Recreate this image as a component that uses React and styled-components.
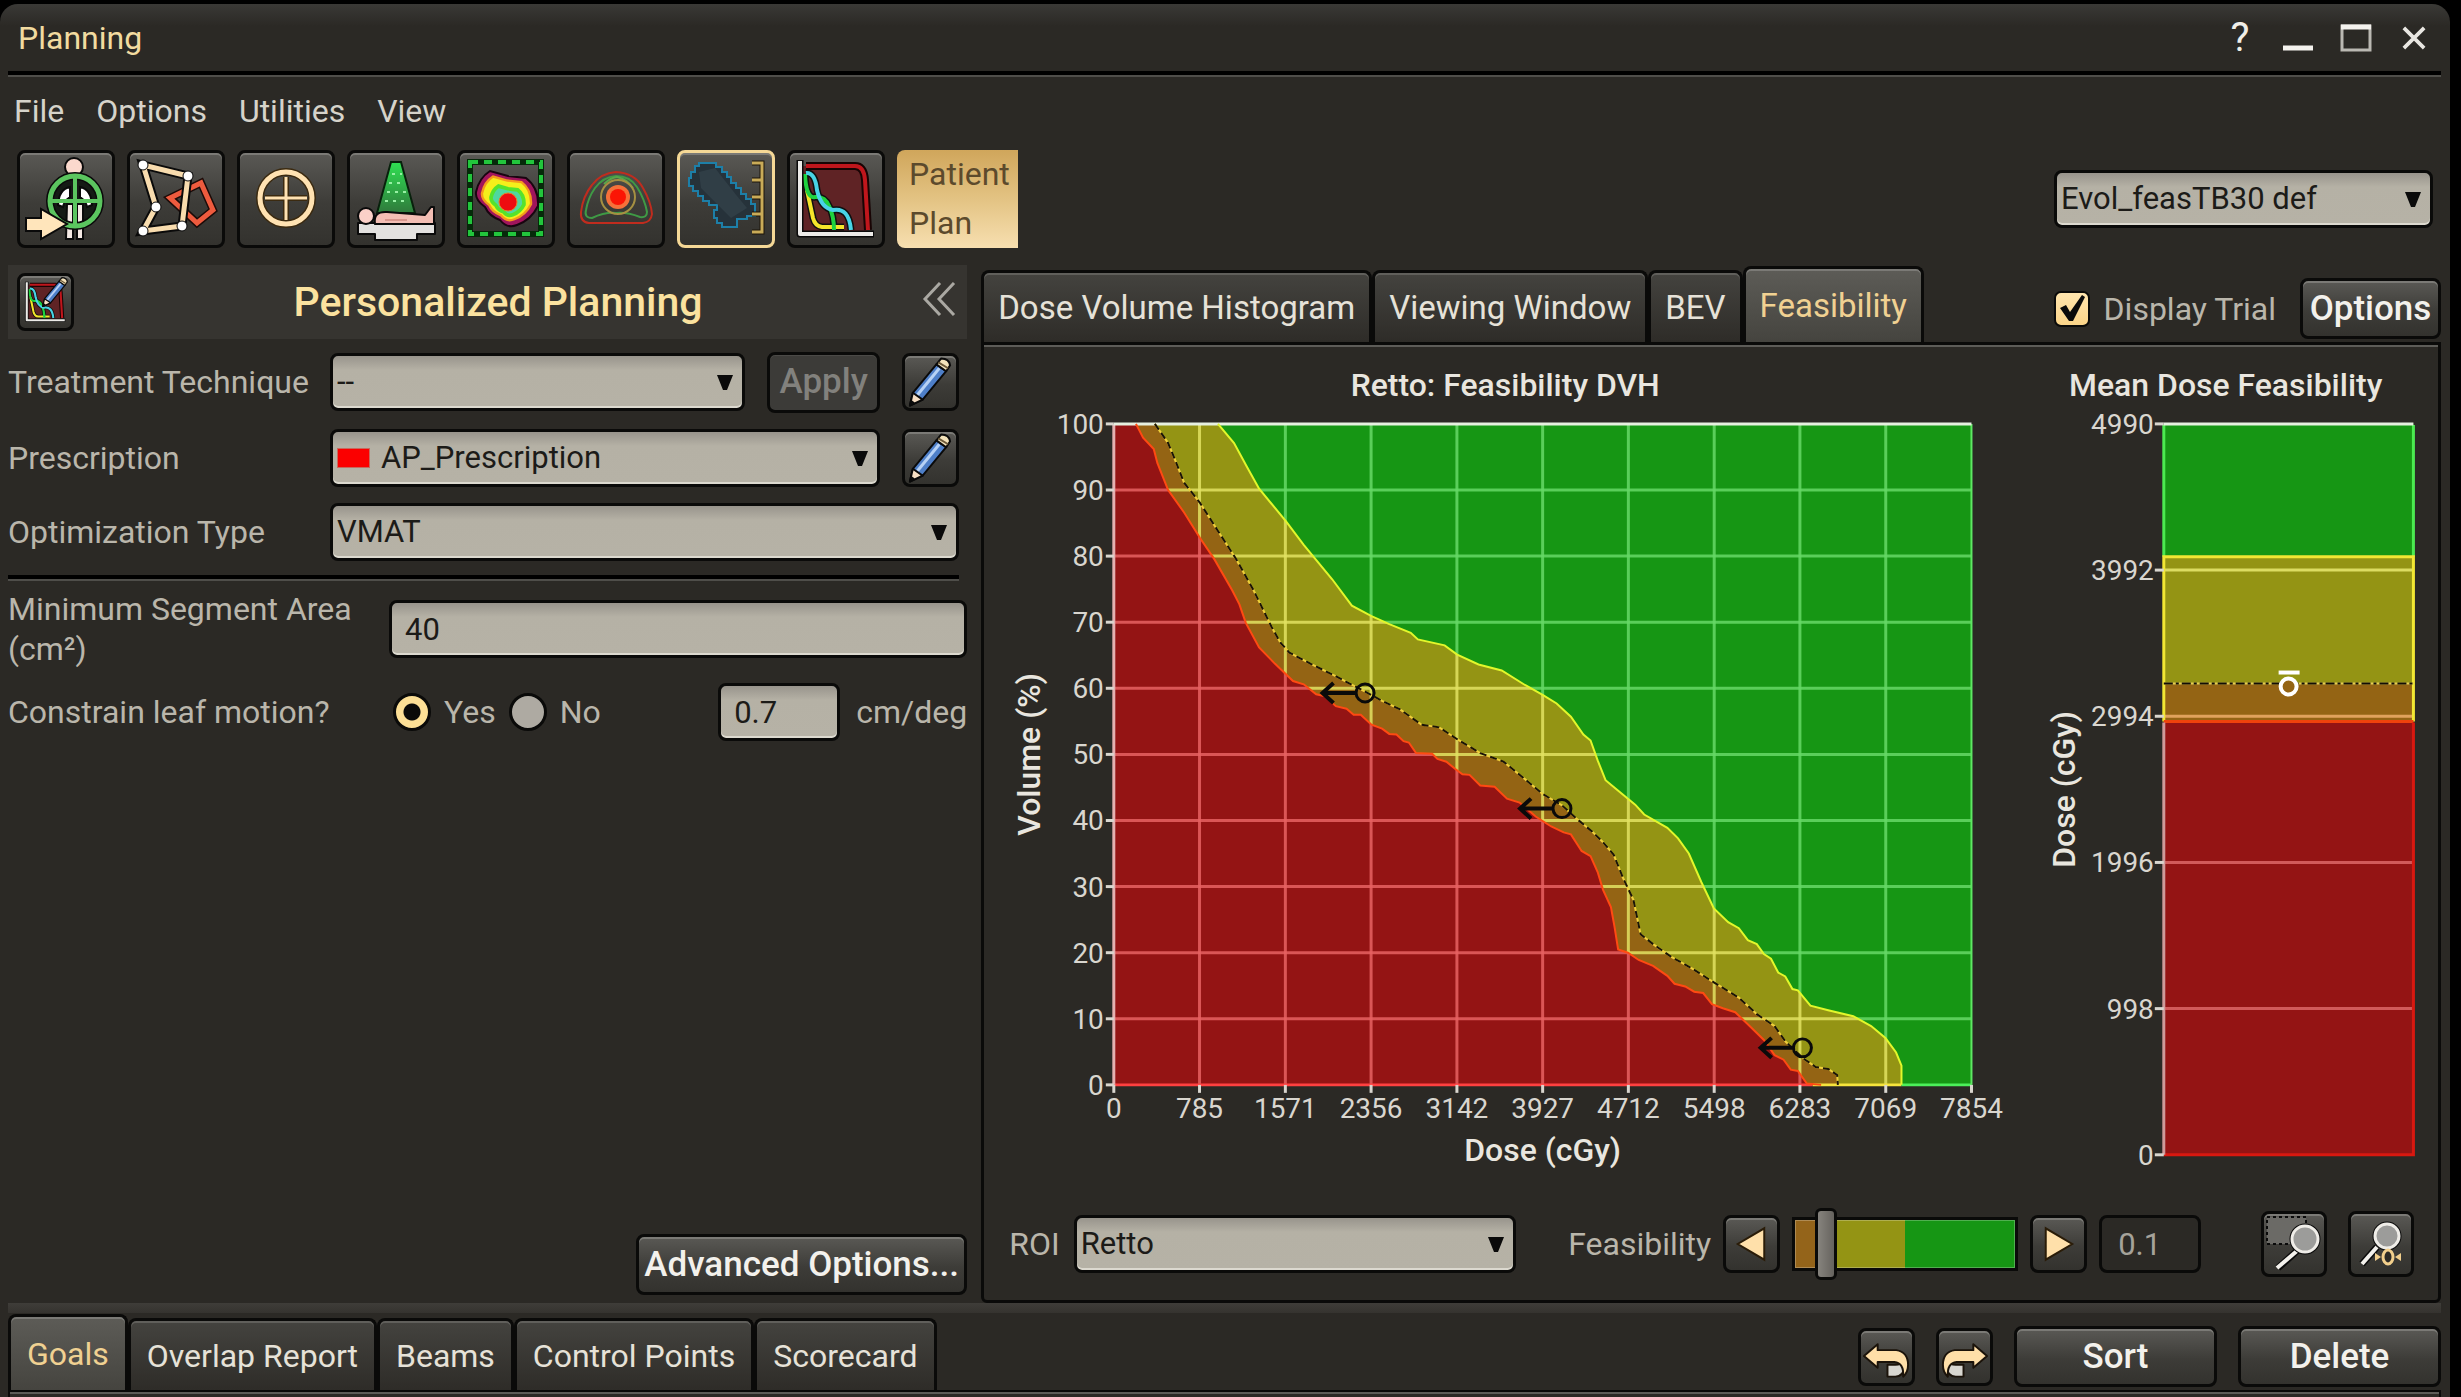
import React from "react";
import styled, { createGlobalStyle, css } from "styled-components";

const GlobalStyle = createGlobalStyle`
  *, *::before, *::after { box-sizing: border-box; }
  body {
    margin: 0;
    background: #000;
    color: #bab6ab;
    font-family: Roboto, "Noto Sans", sans-serif;
    font-size: 32px;
    line-height: 40px;
  }
  button, input, select { font: inherit; margin: 0; }
`;

const raised = css`
  background: linear-gradient(#5a5955, #3d3c38 55%, #33322e);
  border: 3px solid #0a0a09;
  border-radius: 8px;
  box-shadow: inset 0 2px 0 #7b7a76;
`;

const sunken = css`
  background: linear-gradient(#98948c, #b5b1a5 14px, #b6b2a6);
  border: 3px solid #0a0a09;
  border-radius: 8px;
  box-shadow: inset 0 -2px 0 #dcd9cf;
  color: #1c1b18;
  font-size: 31px;
`;

/* ---------- window ---------- */

const Window = styled.div`
  display: flex;
  flex-direction: column;
  min-height: calc(100vh - 4px);
  margin: 4px 11px 0 0;
  padding: 0 9px 0 8px;
  background: linear-gradient(#3a3936, #2b2925 22px);
  border-radius: 18px 18px 0 0;
`;

const Rule = styled.hr`
  flex: none;
  width: 100%;
  height: 6px;
  margin: 0;
  border: 0;
  border-top: 4px solid #000;
  border-bottom: 2px solid #4f4e4a;
`;

const TitleBar = styled.header`
  display: flex;
  align-items: center;
  justify-content: space-between;
  height: 67px;
  padding: 0 5px 0 10px;
`;

const WindowTitle = styled.h1`
  margin: 0;
  font-size: 32px;
  font-weight: 400;
  color: #f2dba0;
`;

const WindowControls = styled.div`
  display: flex;
  gap: 14px;
`;

const WindowButton = styled.button`
  display: grid;
  place-items: center;
  width: 44px;
  height: 44px;
  padding: 0;
  border: 0;
  background: none;
  color: #f0eee8;
  font-size: 40px;
`;

const MenuBar = styled.nav`
  display: flex;
  gap: 32px;
  padding: 14px 6px 0;
  height: 73px;
`;

const MenuItem = styled.a`
  color: #d6d3ca;
  text-decoration: none;
`;

const ToolBar = styled.div`
  display: flex;
  align-items: flex-start;
  gap: 12px;
  height: 115px;
  padding: 0 8px 0 9px;
`;

const ToolButton = styled.button`
  ${raised}
  flex: none;
  width: 98px;
  height: 98px;
  padding: 0;
  overflow: hidden;
  ${(p) => p.$active && css`border-color: #f5d896;`}
  svg { display: block; width: 92px; height: 92px; }
`;

const ContextTile = styled.button`
  flex: none;
  width: 121px;
  height: 98px;
  padding: 0 0 0 12px;
  border: 0;
  border-radius: 8px 0 0 8px;
  background: linear-gradient(#d0a65b, #e3c383 50%, #f7dfb0);
  color: #5c4a2c;
  line-height: 49px;
  text-align: left;
`;

const TrialSlot = styled.div`
  padding-top: 20px;
`;

const Spacer = styled.div`
  flex: 1;
`;

/* ---------- form controls ---------- */

const Combo = styled.div`
  position: relative;
  flex: ${(p) => (p.$width ? "none" : "1")};
  width: ${(p) => (p.$width ? p.$width + "px" : "auto")};
  min-width: 0;
`;

const Select = styled.select`
  ${sunken}
  display: block;
  width: 100%;
  height: 58px;
  padding: 0 40px 0 ${(p) => (p.$swatch ? 48 : 4)}px;
  appearance: none;
`;

const Swatch = styled.span`
  position: absolute;
  left: 7px;
  top: 19px;
  width: 33px;
  height: 20px;
  background: #fb0000;
  border: 1px solid #c86a5e;
`;

const Caret = styled.svg`
  position: absolute;
  right: 12px;
  top: 22px;
  width: 16px;
  height: 15px;
  pointer-events: none;
`;

const Label = styled.label`
  flex: none;
  width: ${(p) => (p.$width ? p.$width + "px" : "auto")};
  white-space: nowrap;
`;

const TextBox = styled.input`
  ${sunken}
  flex: ${(p) => (p.$width ? "none" : "1")};
  width: ${(p) => (p.$width ? p.$width + "px" : "auto")};
  min-width: 0;
  height: 58px;
  padding: 0 13px;
`;

const ReadOut = styled.input`
  width: 102px;
  height: 58px;
  padding: 0 16px;
  background: #2b2925;
  border: 3px solid #0a0a09;
  border-radius: 8px;
  color: #a5a29a;
  font-size: 31px;
`;

const Button = styled.button`
  ${raised}
  flex: none;
  width: ${(p) => p.$width}px;
  height: 61px;
  padding: 0;
  color: #f3f1ec;
  font-size: 35px;
  font-weight: 500;
  white-space: nowrap;
  &:disabled {
    background: #3c3b38;
    box-shadow: inset 0 1px 0 #4b4a47;
    color: #82817d;
  }
`;

const IconButton = styled.button`
  ${raised}
  flex: none;
  display: grid;
  place-items: center;
  width: ${(p) => p.$size || 57}px;
  height: ${(p) => p.$size || 58}px;
  padding: 0;
  svg { display: block; width: 100%; height: 100%; }
`;

const Radio = styled.input`
  flex: none;
  width: 38px;
  height: 38px;
  appearance: none;
  border: 3px solid #0a0a09;
  border-radius: 50%;
  background: #aeaaa2;
  &:checked { background: radial-gradient(circle, #0a0a09 8px, #fcdf96 9px); }
`;

const CheckWrap = styled.span`
  position: relative;
  flex: none;
  display: block;
  width: 36px;
  height: 36px;
  svg { position: absolute; inset: 0; pointer-events: none; }
`;

const CheckBox = styled.input`
  display: block;
  width: 36px;
  height: 36px;
  appearance: none;
  border: 2px solid #0a0a09;
  border-radius: 7px;
  background: linear-gradient(#ffe5ae, #fbd488);
`;

/* ---------- body ---------- */

const Body = styled.main`
  flex: 1;
  display: grid;
  grid-template-columns: minmax(0, 2fr) minmax(0, 3fr);
`;

const Sidebar = styled.section`
  display: flex;
  flex-direction: column;
  padding: 0 14px 8px 0;
`;

const SidebarHeader = styled.div`
  display: flex;
  align-items: center;
  justify-content: space-between;
  height: 74px;
  padding: 0 11px 0 9px;
  background: #363430;
`;

const SidebarTitle = styled.h2`
  margin: 0;
  color: #fbe29f;
  font-size: 41px;
  font-weight: 500;
`;

const Collapse = styled.button`
  width: 34px;
  height: 40px;
  padding: 0;
  border: 0;
  background: none;
`;

const Fields = styled.div`
  display: flex;
  flex-direction: column;
  gap: 14px;
  padding: ${(p) => (p.$inset ? "12px 8px 0 0" : "8px 0 0")};
`;

const Row = styled.div`
  display: flex;
  align-items: center;
  gap: 22px;
  min-height: ${(p) => (p.$tall ? 62 : 58)}px;
`;

const RadioGroup = styled.div`
  flex: 1;
  display: flex;
  align-items: center;
  gap: 13px;
  padding-left: 4px;
`;

const Measure = styled.label`
  display: flex;
  align-items: center;
  gap: 16px;
`;

const SidebarFooter = styled.div`
  display: flex;
  justify-content: flex-end;
  margin-top: auto;
`;

const TabRow = styled.div`
  display: flex;
  align-items: flex-end;
  height: ${(p) => p.$height}px;
  font-size: ${(p) => (p.$compact ? 32 : 33)}px;
  --tab-inset: ${(p) => (p.$compact ? 16 : 14)}px;
`;

const Tab = styled.button`
  flex: none;
  height: ${(p) => (p.$active ? 76 : 72)}px;
  padding: 0 var(--tab-inset);
  border: 3px solid #0a0a09;
  border-bottom: 0;
  border-radius: 8px 8px 0 0;
  background: ${(p) =>
    p.$active
      ? "linear-gradient(#5d5c57, #45443f)"
      : "linear-gradient(#44433f, #2e2c28)"};
  box-shadow: inset 0 2px 0 ${(p) => (p.$active ? "#7b7a76" : "#605f5b")};
  color: ${(p) => (p.$active ? "#f0d192" : "#e6e2d8")};
`;

const Viewer = styled.section`
  display: flex;
  flex-direction: column;
`;

const ViewerPanel = styled.div`
  flex: 1;
  display: flex;
  flex-direction: column;
  justify-content: space-between;
  padding: 16px 24px 20px 6px;
  border: 3px solid #0a0a09;
  border-radius: 0 0 6px 6px;
  box-shadow: inset 0 2px 0 #5d5c58;
`;

const TrialToggle = styled.label`
  display: flex;
  align-items: center;
  gap: 14px;
  height: 60px;
  margin: 0 24px 3px 0;
  font-size: 32px;
`;

const TrialOptions = styled.div`
  margin-bottom: 3px;
`;

const Charts = styled.div`
  display: grid;
  grid-template-columns: 1040fr 386fr;
  svg { display: block; width: 100%; height: auto; overflow: visible; }
`;

const ChartControls = styled.div`
  display: flex;
  align-items: center;
  height: 72px;
  padding-left: 19px;
`;

const RoiField = styled.div`
  display: flex;
  align-items: center;
  gap: 14px;
  width: 507px;
  margin-right: 52px;
`;

const Stepper = styled.div`
  flex: 1;
  display: flex;
  align-items: center;
  gap: 12px;
`;

const ZoomButtons = styled.div`
  display: flex;
  gap: 21px;
`;

const Slider = styled.input`
  width: 226px;
  height: 72px;
  appearance: none;
  background: none;
  &::-webkit-slider-runnable-track {
    height: 54px;
    border: 3px solid #0a0a09;
    background: linear-gradient(90deg, #94641a 0 12%, #949414 12% 50%, #169614 50%);
    box-shadow: inset 0 0 0 1px rgba(255, 255, 255, 0.25);
  }
  &::-webkit-slider-thumb {
    appearance: none;
    width: 22px;
    height: 72px;
    margin-top: -12px;
    border: 3px solid #0a0a09;
    border-radius: 6px;
    background: linear-gradient(90deg, #86837d, #66635e);
  }
`;

/* ---------- bottom ---------- */

const Ledge = styled.div`
  height: 10px;
  background: linear-gradient(#3f3d39, #35332f);
`;

const BottomBar = styled.footer`
  display: flex;
  justify-content: space-between;
  align-items: flex-end;
`;

const Actions = styled.div`
  display: flex;
  align-items: center;
  gap: 21px;
  padding-bottom: 3px;
`;

const BottomEdge = styled.div`
  height: 7px;
  border: 2px solid #0a0a09;
  border-bottom: 0;
  box-shadow: inset 0 2px 0 #5d5c58;
`;

/* ---------- chart text ---------- */

const AxisText = styled.text`
  fill: #d9d6cf;
  font-size: 28px;
`;

const ChartText = styled.text`
  fill: #e9e6df;
  font-size: 32px;
  font-weight: 500;
  text-anchor: middle;
`;

/* ---------- icons ---------- */

const PencilShape = () => (
  <g strokeLinejoin="round">
    <path d="M5 50 L8 37 L32 8 L42 15 L18 44 Z" fill="#4e7fc8" stroke="#0a0a0a" strokeWidth="2" />
    <path d="M12 40 L35 12" stroke="#b7d2f5" strokeWidth="3" />
    <path d="M32 8 L37 2 Q45 2 46 9 L42 15 Z" fill="#f4e3bb" stroke="#0a0a0a" strokeWidth="2" />
    <path d="M34 6 L44 12" stroke="#6d5a3a" strokeWidth="2" />
    <path d="M5 50 L8 37 L18 44 Z" fill="#f7dfc4" stroke="#0a0a0a" strokeWidth="2" />
    <path d="M4 51 L6 44 L10 47 Z" fill="#0a0a0a" />
  </g>
);

const PencilIcon = () => (
  <svg viewBox="0 0 52 52" aria-hidden="true">
    <PencilShape />
  </svg>
);

const HistogramShape = () => (
  <g fill="none" strokeLinejoin="round">
    <path d="M15 16 H68 Q76 16 77 30 L80 81 H15 Z" fill="#5f2325" />
    <path d="M19 16 H68 Q77 16 78 30 L81 80" stroke="#180404" strokeWidth="8" />
    <path d="M19 16 H68 Q77 16 78 30 L81 80" stroke="#c0161c" strokeWidth="4" />
    <g stroke="#101010" strokeWidth="7">
      <path d="M20 40 L26 68 Q28 76 35 77 H57" />
      <path d="M18 24 Q19 49 28 47 Q38 46 42 56 Q47 66 47 80" />
      <path d="M19 23 Q28 22 30 40 Q34 58 46 60 Q62 57 64 80" />
    </g>
    <path d="M20 40 L26 68 Q28 76 35 77 H57" stroke="#f5e52a" strokeWidth="4" />
    <path d="M18 24 Q19 49 28 47 Q38 46 42 56 Q47 66 47 80" stroke="#1fd23f" strokeWidth="4" />
    <path d="M19 23 Q28 22 30 40 Q34 58 46 60 Q62 57 64 80" stroke="#48d3e6" strokeWidth="4" />
    <path d="M13 10 V84 H87" stroke="#0a0a0a" strokeWidth="7" />
    <path d="M13 11 V84 H86" stroke="#ecebe8" strokeWidth="4" />
  </g>
);

const ToolIcon = ({ children }) => (
  <svg viewBox="3 3 92 92" aria-hidden="true">
    {children}
  </svg>
);

const PatientIcon = () => (
  <ToolIcon>
    <g stroke="#0a0a0a" strokeWidth="2">
      <circle cx="57" cy="17" r="9" fill="#fbd9cd" />
      <ellipse cx="58" cy="51" rx="25" ry="25" fill="#151a15" />
      <path d="M41 55 Q42 39 53 37 V47 Q47 51 46 57 Z M75 55 Q74 39 63 37 V47 Q69 51 70 57 Z" fill="#fff" />
      <path d="M50 54 H56 V89 H49 Z M60 54 H66 L66 89 H60 Z" fill="#f4e9e4" />
    </g>
    <g fill="none">
      <circle cx="58" cy="51" r="25" stroke="#0a0a0a" strokeWidth="8" />
      <circle cx="58" cy="51" r="25" stroke="#5bc55f" strokeWidth="5" />
      <path d="M58 27 V75 M34 51 H82" stroke="#5bc55f" strokeWidth="4" />
    </g>
    <path d="M9 68 H24 V59 L50 74 L24 89 V81 H9 Z" fill="#ffe5bb" stroke="#0a0a0a" strokeWidth="2" />
  </ToolIcon>
);

const linkPath = "M16 15 L61 26 L55 76 L16 81 L29 57 Z";

const ContourIcon = () => (
  <ToolIcon>
    <g fill="none">
      <path d="M43 48 L74 33 L86 60 L70 73 Z" stroke="#1c0b08" strokeWidth="8" />
      <path d="M43 48 L74 33 L86 60 L70 73 Z" stroke="#ee5b3e" strokeWidth="5" />
      <path d={linkPath} stroke="#0a0a0a" strokeWidth="9" />
      <path d={linkPath} stroke="#f8dcae" strokeWidth="5" />
    </g>
    {[[16, 15], [61, 26], [55, 76], [16, 81], [29, 57]].map(([x, y]) => (
      <circle key={x + "-" + y} cx={x} cy={y} r="5" fill="#fff" stroke="#0a0a0a" strokeWidth="1" />
    ))}
  </ToolIcon>
);

const CrosshairIcon = () => (
  <ToolIcon>
    <g fill="none">
      <circle cx="49" cy="48" r="26" stroke="#3b2a10" strokeWidth="8" />
      <path d="M49 27 V70 M28 48 H70" stroke="#3b2a10" strokeWidth="6" />
      <circle cx="49" cy="48" r="26" stroke="#ffe2b2" strokeWidth="5" />
      <path d="M49 27 V70 M28 48 H70" stroke="#ffe2b2" strokeWidth="3" />
    </g>
  </ToolIcon>
);

const BeamIcon = () => (
  <ToolIcon>
    <defs>
      <linearGradient id="beam" x1="0" y1="0" x2="0" y2="1">
        <stop offset="0" stopColor="#2fe052" />
        <stop offset="1" stopColor="#2f7a3c" />
      </linearGradient>
    </defs>
    <path d="M44 12 H54 L68 63 H30 Z" fill="url(#beam)" stroke="#08210c" strokeWidth="2" />
    <path d="M45 24 H55 M42 33 H58 M40 42 H60 M38 51 H62" stroke="#97f0a4" strokeWidth="2" strokeDasharray="3 5" />
    <g stroke="#0a0a0a" strokeWidth="2" strokeLinejoin="round">
      <path d="M11 73 H88 V84 H70 V90 H28 V84 H11 Z" fill="#e3e1df" />
      <circle cx="19" cy="66" r="8" fill="#fbd0c8" />
      <path d="M28 74 Q26 61 40 62 L78 65 L84 57 H87 V74 Z" fill="#f3beb4" />
    </g>
    <path d="M38 70 H60" stroke="#d9978d" strokeWidth="2" />
  </ToolIcon>
);

const blob = "M19 42 Q22 28 33 21 L51 26 L69 28 Q82 38 81 56 Q74 70 60 75 Q50 79 43 70 Q32 66 28 57 Q18 50 19 42 Z";

const DoseIcon = () => (
  <ToolIcon>
    <rect x="13" y="12" width="71" height="72" fill="none" stroke="#062a0a" strokeWidth="6" />
    <rect x="13" y="12" width="71" height="72" fill="none" stroke="#22c63c" strokeWidth="4" strokeDasharray="8 6" />
    <path d={blob} fill="#a0155c" stroke="#190510" strokeWidth="2" />
    <path d={blob} fill="#f4ef1b" transform="translate(10 10) scale(.79)" stroke="#f59a1c" strokeWidth="3" />
    <path d={blob} fill="#4fd7a0" transform="translate(24 25) scale(.53)" stroke="#56e22c" strokeWidth="7" />
    <circle cx="51" cy="52" r="9" fill="#ee0c10" stroke="#f07a20" strokeWidth="1" />
  </ToolIcon>
);

const IsodoseIcon = () => (
  <ToolIcon>
    <g fill="none" strokeWidth="2">
      <path d="M49 22 Q68 23 76 38 Q84 52 85 64 Q84 72 76 73 H22 Q13 72 14 62 Q16 46 25 35 Q34 23 49 22 Z" stroke="#c02c1e" />
      <path d="M49 26 Q63 26 70 37 Q78 50 80 62 Q80 68 73 67 Q60 62 49 63 Q38 62 25 68 Q17 68 19 60 Q21 48 28 38 Q36 27 49 26 Z" stroke="#3f9a45" />
      <path d="M37 34 Q43 28 50 27 Q60 29 66 38" stroke="#59a54a" />
      <circle cx="51" cy="47" r="17" stroke="#a59042" />
    </g>
    <circle cx="51" cy="47" r="12" fill="#f6713a" />
    <circle cx="51" cy="47" r="8" fill="#fb1505" />
  </ToolIcon>
);

const RegionIcon = () => (
  <ToolIcon>
    <path
      d="M14 22 H18 V16 H22 V13 H39 V17 H45 V22 H50 V27 H54 V33 H59 V38 H64 V44 H69 V49 H74 V54 H78 V66 H70 V69 H60 V77 H45 V73 H40 V68 H37 V60 H40 V55 H32 V51 H26 V46 H21 V41 H16 V36 H12 V28 H14 Z"
      fill="#26323a" stroke="#1d7fa8" strokeWidth="2"
    />
    <path d="M22 22 L38 18 L60 46 L70 58 L54 68 L46 60 L24 38 Z" fill="#35434b" opacity=".7" />
    <path d="M75 13 H85 V82 H75 M75 30 H85 M75 47 H85 M75 64 H85" fill="none" stroke="#1d1508" strokeWidth="5" />
    <path d="M75 13 H85 V82 H75 M75 30 H85 M75 47 H85 M75 64 H85" fill="none" stroke="#c9ab58" strokeWidth="3" />
  </ToolIcon>
);

const HistogramIcon = () => (
  <ToolIcon>
    <HistogramShape />
  </ToolIcon>
);

const EditHistogramIcon = () => (
  <svg viewBox="0 0 98 98" aria-hidden="true">
    <HistogramShape />
    <g transform="translate(38 0) scale(1.15)">
      <PencilShape />
    </g>
  </svg>
);

const TriangleIcon = ({ left }) => (
  <svg viewBox="0 0 52 52" aria-hidden="true">
    <path d={left ? "M39 10 V42 L12 26 Z" : "M13 10 V42 L40 26 Z"} fill="#ffe0aa" stroke="#2a1c08" strokeWidth="2" />
  </svg>
);

const ArrowShape = () => (
  <g stroke="#1b130a" strokeWidth="2" strokeLinejoin="round">
    <path d="M27 34 H35 Q41 34 43 30 L45 36 Q43 46 35 46 H27 Z" fill="#d8d6d0" />
    <path d="M3 25 L17 13 V19 H36 Q48 21 48 34 Q48 42 43 46 Q44 32 34 31 H17 V37 Z" fill="#ffdfa8" />
  </g>
);

const UndoIcon = ({ flip }) => (
  <svg viewBox="0 0 52 52" aria-hidden="true">
    <g transform={flip ? "translate(52 0) scale(-1 1)" : undefined}>
      <ArrowShape />
    </g>
  </svg>
);

const ZoomAreaIcon = () => (
  <svg viewBox="0 0 60 60" aria-hidden="true">
    <rect x="3" y="3" width="39" height="27" fill="#6b6a66" stroke="#0a0a0a" strokeWidth="2" strokeDasharray="3 3" />
    <path d="M34 36 L14 54" stroke="#0a0a0a" strokeWidth="7" />
    <path d="M34 36 L13 54" stroke="#f3f1ec" strokeWidth="4" />
    <circle cx="41" cy="25" r="13" fill="#9c9c9a" stroke="#0a0a0a" strokeWidth="5" />
    <circle cx="41" cy="25" r="13" fill="#9c9c9a" stroke="#efede8" strokeWidth="3" />
  </svg>
);

const ZoomResetIcon = () => (
  <svg viewBox="0 0 60 60" aria-hidden="true">
    <path d="M26 33 L11 50" stroke="#0a0a0a" strokeWidth="7" />
    <path d="M26 33 L11 50" stroke="#f3f1ec" strokeWidth="4" />
    <circle cx="36" cy="22" r="12" fill="#9c9c9a" stroke="#0a0a0a" strokeWidth="5" />
    <circle cx="36" cy="22" r="12" fill="#9c9c9a" stroke="#efede8" strokeWidth="3" />
    <ellipse cx="37" cy="43" rx="5" ry="7" fill="#2b2925" stroke="#f2cf8c" strokeWidth="3" />
    <path d="M24 39 L30 43 L24 47 Z M50 39 L44 43 L50 47 Z" fill="#f2cf8c" />
  </svg>
);

const MinimizeIcon = () => (
  <svg width="32" height="32" viewBox="0 0 32 32" aria-hidden="true">
    <path d="M1 26 H31" stroke="#f4f2ee" strokeWidth="5" />
  </svg>
);

const MaximizeIcon = () => (
  <svg width="32" height="28" viewBox="0 0 32 28" aria-hidden="true">
    <rect x="2" y="2" width="28" height="24" fill="none" stroke="#bab8b2" strokeWidth="3" />
    <path d="M1 3 H31" stroke="#f4f2ee" strokeWidth="5" />
  </svg>
);

const CloseIcon = () => (
  <svg width="24" height="24" viewBox="0 0 26 26" aria-hidden="true">
    <path d="M2 2 L24 24 M24 2 L2 24" stroke="#e9e7e2" strokeWidth="4" />
  </svg>
);

/* ---------- charts ---------- */

const ZONES = { red: "#941414", orange: "#946414", yellow: "#949414", green: "#169614" };

const PLOT = { width: 859, height: 662, maxDose: 7854 };
const px = (dose) => (dose / PLOT.maxDose) * PLOT.width;
const py = (volume) => PLOT.height - (volume / 100) * PLOT.height;
const toLine = (points) => points.map(([d, v]) => `${px(d).toFixed(1)},${py(v).toFixed(1)}`).join(" ");

const IMPOSSIBLE = [
  [203, 100], [268, 97.9], [366, 96.2], [399, 94.1], [497, 90], [644, 86.6], [791, 82.7], [922, 79.5],
  [1085, 74.8], [1150, 72.7], [1209, 69.9], [1330, 66.2], [1477, 63.7], [1641, 61.1], [1739, 60.6],
  [1853, 59.1], [1935, 58.8], [2033, 57.3], [2131, 56.9], [2196, 56], [2261, 56], [2360, 54.5],
  [2457, 53.9], [2523, 53.1], [2588, 53], [2653, 52], [2702, 51.8], [2768, 50.2], [2915, 50.1],
  [2964, 49.3], [3046, 48.9], [3127, 47.8], [3193, 47], [3258, 46.9], [3356, 45.3], [3487, 45.1],
  [3601, 43.3], [3716, 42.7], [3863, 40.6], [4006, 39.1], [4120, 38.2], [4186, 37.9], [4284, 35.4],
  [4366, 34.6], [4431, 32.2], [4480, 29.5], [4552, 26.9], [4585, 23.9], [4618, 20.5], [4709, 20],
  [4807, 18.9], [4938, 18], [5069, 16.5], [5135, 15.3], [5233, 14.9], [5315, 14.1], [5397, 13.9],
  [5478, 12.2], [5577, 11.6], [5691, 11], [5822, 8.9], [5953, 6.8], [6051, 4.5], [6133, 3.8],
  [6199, 2.3], [6264, 2.1], [6346, 0.2], [6477, 0],
];

const DIFFICULT = [
  [376, 100], [497, 97.1], [562, 94.5], [644, 91.1], [791, 88], [954, 83.8], [1118, 79.6], [1281, 74.8],
  [1444, 69.3], [1526, 66.9], [1608, 65.4], [1804, 63.7], [2000, 62.1], [2301, 59.5], [2457, 58.1],
  [2621, 56.8], [2817, 54.5], [2980, 54.1], [3144, 52.3], [3356, 50.2], [3569, 48.9], [3732, 46.7],
  [3927, 44], [4104, 42.3], [4235, 40.3], [4382, 38.3], [4480, 36.7], [4578, 34.8], [4660, 31.4],
  [4758, 28], [4824, 22.8], [4938, 21.3], [5102, 19.4], [5298, 17.6], [5495, 15.5], [5724, 13.2],
  [5888, 10.7], [6051, 8.9], [6149, 6.6], [6313, 4], [6428, 2.7], [6542, 2.4], [6624, 1.5], [6631, 0],
];

const CHALLENGING = [
  [954, 100], [1101, 97.1], [1216, 93.6], [1330, 90.2], [1575, 85.3], [1739, 81.7], [2000, 76.5],
  [2180, 72.5], [2360, 70.9], [2523, 69.7], [2719, 68.4], [2784, 67.4], [3029, 66.5], [3144, 65.1],
  [3340, 63.6], [3552, 62.7], [3765, 60.5], [3927, 59], [4055, 57.7], [4186, 55.7], [4300, 53],
  [4366, 52.1], [4431, 49.1], [4503, 46.1], [4611, 44.6], [4775, 42.4], [4857, 40.9], [5069, 38.9],
  [5167, 37.3], [5266, 35], [5380, 30.7], [5495, 26.7], [5626, 24.6], [5724, 23.7], [5806, 21.9],
  [5888, 21.3], [5953, 19.8], [6018, 19.1], [6084, 17], [6149, 16.4], [6215, 14.5], [6264, 14.3],
  [6379, 12], [6542, 11.3], [6771, 10.4], [6935, 8.9], [7066, 7.1], [7164, 4.9], [7213, 2.9], [7213, 0],
];

const OBJECTIVES = [
  { dose: 2301, tip: 1902, volume: 59.3 },
  { dose: 4104, tip: 3711, volume: 41.8 },
  { dose: 6306, tip: 5914, volume: 5.6 },
];

const DOSE_TICKS = [0, 785, 1571, 2356, 3142, 3927, 4712, 5498, 6283, 7069, 7854];
const VOLUME_TICKS = [0, 10, 20, 30, 40, 50, 60, 70, 80, 90, 100];

const area = (points) => `0,0 ${toLine(points)} 0,${PLOT.height}`;

const Grid = ({ color, clip }) => (
  <g stroke={color} strokeWidth="3" strokeOpacity=".85" clipPath={clip && `url(#${clip})`}>
    {DOSE_TICKS.slice(1, -1).map((d) => (
      <line key={d} x1={px(d)} x2={px(d)} y1="0" y2={PLOT.height} />
    ))}
    {VOLUME_TICKS.slice(1, -1).map((v) => (
      <line key={v} x1="0" x2={PLOT.width} y1={py(v)} y2={py(v)} />
    ))}
  </g>
);

const DvhChart = () => (
  <svg viewBox="0 0 1040 815" role="img" aria-label="Retto: Feasibility DVH">
    <defs>
      <clipPath id="zone-challenging"><polygon points={area(CHALLENGING)} /></clipPath>
      <clipPath id="zone-impossible"><polygon points={area(IMPOSSIBLE)} /></clipPath>
    </defs>
    <ChartText x="516" y="35">Retto: Feasibility DVH</ChartText>
    <g transform="translate(124 63)">
      <rect width={PLOT.width} height={PLOT.height} fill={ZONES.green} />
      <Grid color="#66d866" />
      <polygon points={area(CHALLENGING)} fill={ZONES.yellow} />
      <polygon points={area(DIFFICULT)} fill={ZONES.orange} />
      <Grid color="#e2e262" clip="zone-challenging" />
      <polygon points={area(IMPOSSIBLE)} fill={ZONES.red} />
      <Grid color="#e66262" clip="zone-impossible" />
      <line y1={PLOT.height} x2={px(6400)} y2={PLOT.height} stroke="#ff4040" strokeWidth="3" />
      <line x1={px(6400)} x2={px(7213)} y1={PLOT.height} y2={PLOT.height} stroke="#f6e43c" strokeWidth="3" />
      <line x1={px(7213)} x2={PLOT.width} y1={PLOT.height} y2={PLOT.height} stroke="#4cf05a" strokeWidth="3" />
      <line x1={PLOT.width} x2={PLOT.width} y2={PLOT.height} stroke="#5de863" strokeWidth="2" />
      <line y2={PLOT.height} stroke="#e5b0b0" strokeWidth="3" />
      <line x2={PLOT.width} stroke="#e6f0e0" strokeWidth="3" />
      <g fill="none">
        <polyline points={toLine(CHALLENGING)} stroke="#e2f72b" strokeWidth="2" />
        <polyline points={toLine(IMPOSSIBLE)} stroke="#ff4a12" strokeWidth="2" />
        <polyline points={toLine(DIFFICULT)} stroke="#efcf3a" strokeWidth="2" />
        <polyline points={toLine(DIFFICULT)} stroke="#1a1408" strokeWidth="2" strokeDasharray="7 4" />
      </g>
      <g stroke="#0a0a0a" strokeWidth="4" fill="none">
        {OBJECTIVES.map(({ dose, tip, volume }) => (
          <g key={dose}>
            <circle cx={px(dose)} cy={py(volume)} r="9" strokeWidth="3" />
            <path
              d={`M${px(dose) - 9} ${py(volume)} H${px(tip) + 1} m11 -10 l-11 10 l11 10`}
            />
          </g>
        ))}
      </g>
      <g stroke="#d9d6cf" strokeWidth="3">
        {DOSE_TICKS.map((d) => (
          <line key={d} x1={px(d)} x2={px(d)} y1={PLOT.height} y2={PLOT.height + 8} />
        ))}
        {VOLUME_TICKS.map((v) => (
          <line key={v} x1="-8" x2="0" y1={py(v)} y2={py(v)} />
        ))}
      </g>
      {DOSE_TICKS.map((d) => (
        <AxisText key={d} x={px(d)} y={PLOT.height + 33} textAnchor="middle">{d}</AxisText>
      ))}
      {VOLUME_TICKS.map((v) => (
        <AxisText key={v} x="-10" y={py(v) + 10} textAnchor="end">{v}</AxisText>
      ))}
      <ChartText x={PLOT.width / 2} y={PLOT.height + 76}>Dose (cGy)</ChartText>
      <ChartText transform={`translate(-74 ${PLOT.height / 2}) rotate(-90)`}>Volume (%)</ChartText>
    </g>
  </svg>
);

const MEAN_TICKS = [0, 998, 1996, 2994, 3992, 4990];
const BAR = { width: 250, height: 732 };
const my = (dose) => BAR.height - (dose / 4990) * BAR.height;
const meanLineColor = (dose) => (dose < 2900 ? "#d25a5a" : dose < 3000 ? "#e0a25c" : "#dcdc62");

const MeanDoseChart = () => (
  <svg viewBox="0 0 386 815" role="img" aria-label="Mean Dose Feasibility">
    <ChartText x="197" y="35">Mean Dose Feasibility</ChartText>
    <g transform="translate(135 63)">
      <rect width={BAR.width} height="133" fill={ZONES.green} />
      <rect y="133" width={BAR.width} height="127" fill={ZONES.yellow} />
      <rect y="260" width={BAR.width} height="38" fill={ZONES.orange} />
      <rect y="298" width={BAR.width} height="434" fill={ZONES.red} />
      <g strokeWidth="3">
        {MEAN_TICKS.slice(1, -1).map((d) => (
          <line key={d} x2={BAR.width} y1={my(d)} y2={my(d)} stroke={meanLineColor(d)} />
        ))}
      </g>
      <g strokeWidth="3">
        <path d="M0 133 V1 M250 1 V133" stroke="#4bea50" />
        <path d="M0 298 V133 H250 V298" fill="none" stroke="#f2e733" />
        <path d="M0 298 H250" stroke="#ef420c" />
        <path d="M250 299 V732 H0" fill="none" stroke="#d81810" />
        <path d="M0 299 V732" stroke="#cf9a9a" />
        <path d="M0 0 H250" stroke="#e6f0e0" />
      </g>
      <path d="M0 260 H250" stroke="#e5cf54" strokeWidth="2" />
      <path d="M0 260 H250" stroke="#120e06" strokeWidth="2" strokeDasharray="9 3 3 3" />
      <g stroke="#fff" fill="none">
        <circle cx="125" cy="263" r="8" fill={ZONES.orange} strokeWidth="4" />
        <path d="M115 249 H136" strokeWidth="4" />
      </g>
      <g stroke="#d9d6cf" strokeWidth="3">
        {MEAN_TICKS.map((d) => (
          <line key={d} x1="-9" x2="0" y1={my(d)} y2={my(d)} />
        ))}
      </g>
      {MEAN_TICKS.map((d) => (
        <AxisText key={d} x="-10" y={my(d) + 10} textAnchor="end">{d}</AxisText>
      ))}
      <ChartText transform={`translate(-89 ${BAR.height / 2}) rotate(-90)`}>Dose (cGy)</ChartText>
    </g>
  </svg>
);

/* ---------- composed parts ---------- */

const ComboBox = ({ id, label, value, width, swatch }) => (
  <Combo $width={width}>
    <Select id={id} aria-label={label} defaultValue={value} $swatch={swatch}>
      <option>{value}</option>
    </Select>
    {swatch && <Swatch />}
    <Caret viewBox="0 0 16 15" aria-hidden="true">
      <path d="M0 0 H16 L10 15 H6 Z" fill="#0a0a0a" />
    </Caret>
  </Combo>
);

const TOOLS = [
  ["Patient setup", PatientIcon],
  ["Contouring", ContourIcon],
  ["Points of interest", CrosshairIcon],
  ["Beams", BeamIcon],
  ["Dose grid", DoseIcon],
  ["Isodose lines", IsodoseIcon],
  ["Personalized planning", RegionIcon],
  ["Dose volume histogram", HistogramIcon],
];

export default function App() {
  return (
    <>
      <GlobalStyle />
      <Window>
        <TitleBar>
          <WindowTitle>Planning</WindowTitle>
          <WindowControls>
            <WindowButton aria-label="Help">?</WindowButton>
            <WindowButton aria-label="Minimize"><MinimizeIcon /></WindowButton>
            <WindowButton aria-label="Maximize"><MaximizeIcon /></WindowButton>
            <WindowButton aria-label="Close"><CloseIcon /></WindowButton>
          </WindowControls>
        </TitleBar>
        <Rule />
        <MenuBar>
          {["File", "Options", "Utilities", "View"].map((item) => (
            <MenuItem key={item} href="#">{item}</MenuItem>
          ))}
        </MenuBar>
        <ToolBar>
          {TOOLS.map(([name, Icon]) => (
            <ToolButton key={name} aria-label={name} $active={name === "Personalized planning"}>
              <Icon />
            </ToolButton>
          ))}
          <ContextTile>Patient<br />Plan</ContextTile>
          <Spacer />
          <TrialSlot>
            <ComboBox label="Trial" value="Evol_feasTB30 def" width={379} />
          </TrialSlot>
        </ToolBar>

        <Body>
          <Sidebar>
            <SidebarHeader>
              <IconButton aria-label="Edit plan"><EditHistogramIcon /></IconButton>
              <SidebarTitle>Personalized Planning</SidebarTitle>
              <Collapse aria-label="Collapse panel">
                <svg width="34" height="34" viewBox="0 0 34 34" aria-hidden="true">
                  <path d="M18 1 L3 17 L18 33 M32 1 L17 17 L32 33" fill="none" stroke="#aaa8a2" strokeWidth="3" />
                </svg>
              </Collapse>
            </SidebarHeader>

            <Fields $inset>
              <Row $tall>
                <Label htmlFor="technique" $width={300}>Treatment Technique</Label>
                <ComboBox id="technique" value="--" />
                <Button $width={113} disabled>Apply</Button>
                <IconButton aria-label="Edit technique"><PencilIcon /></IconButton>
              </Row>
              <Row $tall>
                <Label htmlFor="prescription" $width={300}>Prescription</Label>
                <ComboBox id="prescription" value="AP_Prescription" swatch />
                <IconButton aria-label="Edit prescription"><PencilIcon /></IconButton>
              </Row>
              <Row>
                <Label htmlFor="optimization" $width={300}>Optimization Type</Label>
                <ComboBox id="optimization" value="VMAT" />
              </Row>
              <Rule />
            </Fields>

            <Fields>
              <Row>
                <Label htmlFor="segment" $width={359}>Minimum Segment Area<br />(cm²)</Label>
                <TextBox id="segment" defaultValue="40" />
              </Row>
              <Row>
                <Label as="span" $width={359}>Constrain leaf motion?</Label>
                <RadioGroup role="radiogroup" aria-label="Constrain leaf motion?">
                  <Radio type="radio" id="leaf-yes" name="leaf" defaultChecked />
                  <Label htmlFor="leaf-yes">Yes</Label>
                  <Radio type="radio" id="leaf-no" name="leaf" />
                  <Label htmlFor="leaf-no">No</Label>
                </RadioGroup>
                <Measure>
                  <TextBox defaultValue="0.7" $width={122} />
                  cm/deg
                </Measure>
              </Row>
            </Fields>

            <SidebarFooter>
              <Button $width={331}>Advanced Options...</Button>
            </SidebarFooter>
          </Sidebar>

          <Viewer>
            <TabRow $height={77}>
              <Tab>Dose Volume Histogram</Tab>
              <Tab>Viewing Window</Tab>
              <Tab>BEV</Tab>
              <Tab $active>Feasibility</Tab>
              <Spacer />
              <TrialToggle>
                <CheckWrap>
                  <CheckBox type="checkbox" defaultChecked />
                  <svg width="36" height="36" viewBox="0 0 36 36" aria-hidden="true">
                    <path d="M6 17 L12 14 L16 21 L28 4 L31 6 L19 30 H15 Z" fill="#0a0a0a" />
                  </svg>
                </CheckWrap>
                Display Trial
              </TrialToggle>
              <TrialOptions>
                <Button $width={141}>Options</Button>
              </TrialOptions>
            </TabRow>
            <ViewerPanel>
              <Charts>
                <DvhChart />
                <MeanDoseChart />
              </Charts>
              <ChartControls>
                <RoiField>
                  <Label htmlFor="roi">ROI</Label>
                  <ComboBox id="roi" value="Retto" />
                </RoiField>
                <Stepper>
                  <Label htmlFor="feasibility">Feasibility</Label>
                  <IconButton aria-label="Decrease feasibility"><TriangleIcon left /></IconButton>
                  <Slider type="range" id="feasibility" min="0" max="1" step="0.1" defaultValue="0.1" />
                  <IconButton aria-label="Increase feasibility"><TriangleIcon /></IconButton>
                  <ReadOut aria-label="Feasibility value" readOnly value="0.1" />
                </Stepper>
                <ZoomButtons>
                  <IconButton $size={66} aria-label="Zoom to area"><ZoomAreaIcon /></IconButton>
                  <IconButton $size={66} aria-label="Reset zoom"><ZoomResetIcon /></IconButton>
                </ZoomButtons>
              </ChartControls>
            </ViewerPanel>
          </Viewer>
        </Body>

        <Ledge />
        <BottomBar>
          <TabRow $height={77} $compact>
            <Tab $active>Goals</Tab>
            <Tab>Overlap Report</Tab>
            <Tab>Beams</Tab>
            <Tab>Control Points</Tab>
            <Tab>Scorecard</Tab>
          </TabRow>
          <Actions>
            <IconButton aria-label="Undo"><UndoIcon /></IconButton>
            <IconButton aria-label="Redo"><UndoIcon flip /></IconButton>
            <Button $width={203}>Sort</Button>
            <Button $width={203}>Delete</Button>
          </Actions>
        </BottomBar>
        <BottomEdge />
      </Window>
    </>
  );
}
